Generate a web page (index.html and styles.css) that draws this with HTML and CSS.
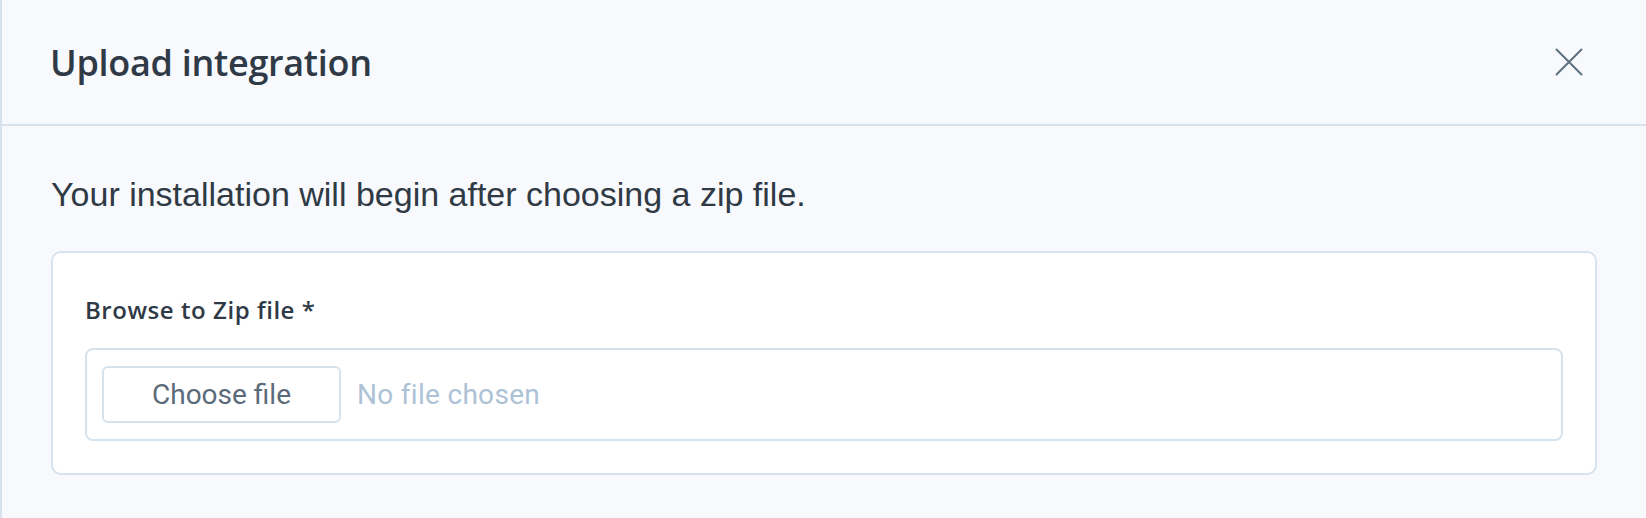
FILE: index.html
```html
<!DOCTYPE html>
<html lang="en">
<head>
<meta charset="utf-8">
<title>Upload integration</title>
<link rel="stylesheet" href="styles.css">
</head>
<body>
<div class="modal">
  <header class="modal-header">
    <h1 class="modal-title">Upload integration</h1>
    <button class="close-btn" type="button" aria-label="Close">
      <svg width="28" height="28" viewBox="0 0 28 28" aria-hidden="true">
        <path d="M1.5 1.5 L26.5 26.5 M26.5 1.5 L1.5 26.5" stroke="currentColor" stroke-width="2" stroke-linecap="round" fill="none"/>
      </svg>
    </button>
  </header>
  <main class="modal-body">
    <p class="intro">Your installation will begin after choosing a zip file.</p>
    <section class="card">
      <div class="field-label">Browse to Zip file *</div>
      <div class="file-field">
        <button class="choose-btn" type="button">Choose file</button>
        <span class="file-name">No file chosen</span>
      </div>
    </section>
  </main>
</div>
</body>
</html>
```
FILE: styles.css
```css
html, body {
  margin: 0;
  padding: 0;
  background: #f7f9fd;
}

.modal {
  min-height: 518px;
  border-left: 2px solid #d6e3ec;
  background: #f7f9fd;
}

.modal-header {
  box-sizing: border-box;
  height: 126px;
  border-bottom: 2px solid #d6e3ec;
  display: flex;
  align-items: center;
  justify-content: space-between;
  padding: 0 63px 0 48px;
}

.modal-title {
  margin: 0;
  font-family: "Open Sans", "Noto Sans", sans-serif;
  font-weight: 600;
  font-size: 36px;
  color: #2f3a46;
  letter-spacing: -0.3px;
}

.close-btn {
  border: 0;
  background: transparent;
  padding: 0;
  width: 28px;
  height: 28px;
  color: #5e717f;
  display: flex;
}

.modal-body {
  padding: 48px 49px 0 49px;
}

.intro {
  margin: 0 0 37px 0;
  font-family: "Liberation Sans", Arial, sans-serif;
  font-size: 34px;
  line-height: 40px;
  color: #2f3a45;
}

.card {
  background: #ffffff;
  border: 2px solid #d6e3ec;
  border-radius: 10px;
  padding: 32px;
}

.field-label {
  font-family: "Open Sans", "Noto Sans", sans-serif;
  font-weight: 600;
  font-size: 24px;
  letter-spacing: 0.55px;
  line-height: 44px;
  padding-top: 3px;
  color: #2f3a46;
  margin-bottom: 16px;
}

.file-field {
  display: flex;
  align-items: center;
  gap: 16px;
  border: 2px solid #d6e3ec;
  border-radius: 8px;
  padding: 16px 15px;
}

.choose-btn {
  width: 239px;
  height: 57px;
  box-sizing: border-box;
  border: 2px solid #d6e3ec;
  border-radius: 6px;
  background: #ffffff;
  font-family: Roboto, "Liberation Sans", sans-serif;
  font-size: 28px;
  color: #5b6b79;
  padding: 0;
}

.file-name {
  font-family: Roboto, "Liberation Sans", sans-serif;
  font-size: 28px;
  letter-spacing: 0.3px;
  color: #adc2d6;
}
```
